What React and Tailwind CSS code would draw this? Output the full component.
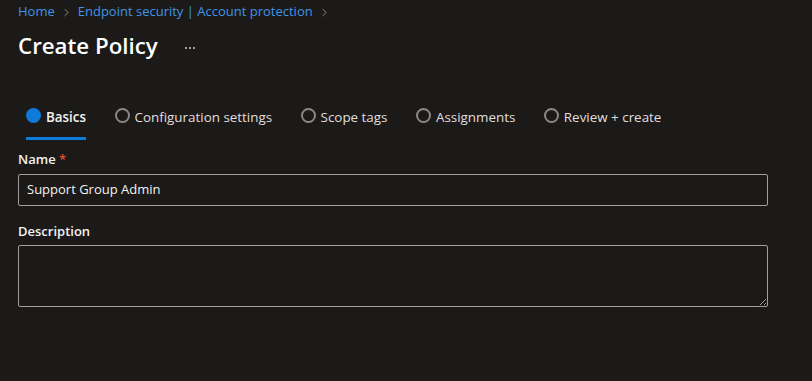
import { ChevronRight } from "lucide-react";

const steps = [
  { label: "Basics", active: true },
  { label: "Configuration settings" },
  { label: "Scope tags" },
  { label: "Assignments" },
  { label: "Review + create" },
];

const App = () => {
  return (
    <div
      className="w-[812px] h-[381px] bg-[#1b1a19] text-[#f3f2f1] overflow-hidden px-[18px]"
      style={{ fontFamily: '"Open Sans", "Noto Sans", sans-serif' }}
    >
      {/* Breadcrumb */}
      <div className="flex items-center h-[24px] text-[13px] text-[#3f95e6]">
        <span>Home</span>
        <ChevronRight size={13} className="mx-[5px] text-[#a19f9d]" strokeWidth={1.5} />
        <span>Endpoint security | Account protection</span>
        <ChevronRight size={13} className="mx-[5px] text-[#a19f9d]" strokeWidth={1.5} />
      </div>

      {/* Title */}
      <div className="flex items-center h-[44px]">
        <h1 className="text-[22.3px] font-semibold text-white leading-none">Create Policy</h1>
        <div className="ml-[27px] mt-[4px] flex gap-[2px]">
          <span className="w-[2px] h-[2px] bg-[#a19f9d]" />
          <span className="w-[2px] h-[2px] bg-[#a19f9d]" />
          <span className="w-[2px] h-[2px] bg-[#a19f9d]" />
        </div>
      </div>

      {/* Steps */}
      <div className="flex items-end mt-[30px] pl-[8px] h-[42px]">
        {steps.map((s) => (
          <div
            key={s.label}
            className={`flex items-center h-full gap-[5px] mr-[28.5px] border-b-[3px] ${
              s.active ? "border-[#0f7ad8]" : "border-transparent"
            }`}
          >
            {s.active ? (
              <span className="w-[15px] h-[15px] rounded-full bg-[#0f7ad8] mb-[4px]" />
            ) : (
              <span className="w-[15px] h-[15px] rounded-full border-[2px] border-[#8a8886] mb-[4px]" />
            )}
            <span className={`text-[13.4px] ${s.active ? "font-semibold text-[#f3f2f1]" : "text-[#e1dfdd]"}`}>
              {s.label}
            </span>
          </div>
        ))}
      </div>

      {/* Name */}
      <div className="mt-[10px]">
        <div className="text-[13px] font-semibold leading-[18px]">
          Name <span className="text-[#e54d2e]">*</span>
        </div>
        <div className="mt-[6px] w-[750px] h-[32px] border border-[#a19f9d] rounded-[2px] flex items-center px-[8px] text-[13px] text-[#f3f2f1]">
          Support Group Admin
        </div>
      </div>

      {/* Description */}
      <div className="mt-[16px]">
        <div className="text-[13px] font-semibold leading-[18px]">Description</div>
        <textarea className="mt-[5px] w-[750px] h-[62px] block border border-[#a19f9d] rounded-[2px] bg-transparent resize-y outline-none" />
      </div>
    </div>
  );
};

export default App;
